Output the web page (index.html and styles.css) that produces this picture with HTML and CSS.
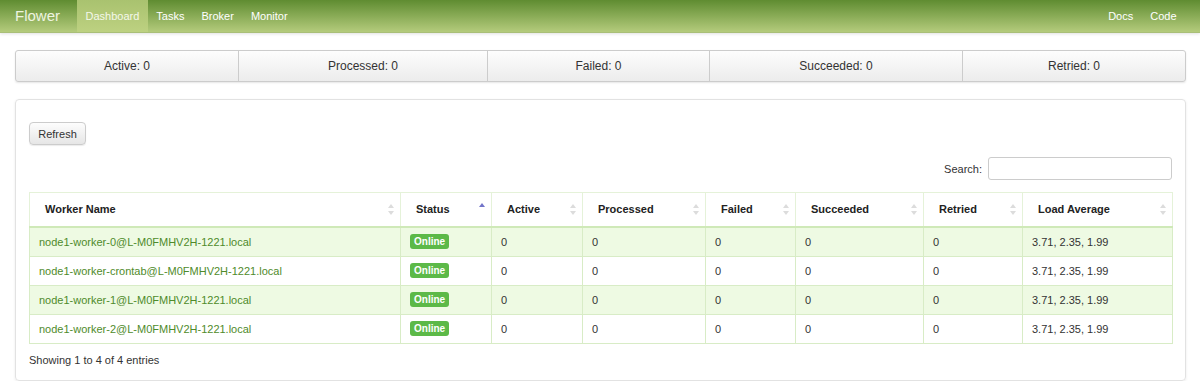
FILE: index.html
```html
<!DOCTYPE html>
<html lang="en">
<head>
  <meta charset="UTF-8">
  <title>Flower</title>
  <link rel="stylesheet" href="styles.css">
</head>
<body>
  <div class="navbar">
    <span class="brand">Flower</span>
    <a class="nav-link active">Dashboard</a>
    <a class="nav-link">Tasks</a>
    <a class="nav-link">Broker</a>
    <a class="nav-link">Monitor</a>
    <span class="spacer"></span>
    <a class="nav-link">Docs</a>
    <a class="nav-link">Code</a>
  </div>

  <div class="stats">
    <div class="stat" style="width:222px">Active: 0</div>
    <div class="stat" style="width:248px">Processed: 0</div>
    <div class="stat" style="width:221px">Failed: 0</div>
    <div class="stat" style="width:252px">Succeeded: 0</div>
    <div class="stat last">Retried: 0</div>
  </div>

  <div class="panel">
    <button class="btn">Refresh</button>
    <div class="search-row">
      <label>Search:</label>
      <input type="text" class="search">
    </div>
    <table class="workers">
      <thead>
        <tr>
          <th style="width:371px">Worker Name<span class="sort"></span></th>
          <th style="width:91px">Status<span class="sort asc"></span></th>
          <th style="width:91px">Active<span class="sort"></span></th>
          <th style="width:123px">Processed<span class="sort"></span></th>
          <th style="width:90px">Failed<span class="sort"></span></th>
          <th style="width:128px">Succeeded<span class="sort"></span></th>
          <th style="width:99px">Retried<span class="sort"></span></th>
          <th>Load Average<span class="sort"></span></th>
        </tr>
      </thead>
      <tbody>
        <tr class="odd">
          <td class="name">node1-worker-0@L-M0FMHV2H-1221.local</td>
          <td><span class="badge">Online</span></td>
          <td>0</td><td>0</td><td>0</td><td>0</td><td>0</td>
          <td>3.71, 2.35, 1.99</td>
        </tr>
        <tr>
          <td class="name">node1-worker-crontab@L-M0FMHV2H-1221.local</td>
          <td><span class="badge">Online</span></td>
          <td>0</td><td>0</td><td>0</td><td>0</td><td>0</td>
          <td>3.71, 2.35, 1.99</td>
        </tr>
        <tr class="odd">
          <td class="name">node1-worker-1@L-M0FMHV2H-1221.local</td>
          <td><span class="badge">Online</span></td>
          <td>0</td><td>0</td><td>0</td><td>0</td><td>0</td>
          <td>3.71, 2.35, 1.99</td>
        </tr>
        <tr>
          <td class="name">node1-worker-2@L-M0FMHV2H-1221.local</td>
          <td><span class="badge">Online</span></td>
          <td>0</td><td>0</td><td>0</td><td>0</td><td>0</td>
          <td>3.71, 2.35, 1.99</td>
        </tr>
      </tbody>
    </table>
    <div class="info">Showing 1 to 4 of 4 entries</div>
  </div>
</body>
</html>
```

FILE: styles.css
```css
body {
  margin: 0;
  font-family: 'Liberation Sans', Arial, sans-serif;
  font-size: 11px;
  color: #333;
  background: #fff;
}
.navbar {
  display: flex;
  align-items: stretch;
  height: 32px;
  padding: 0 15px;
  background: linear-gradient(to bottom, #5f8c31, #b4cb7c);
  border-bottom: 1px solid #a9bf78;
  box-shadow: 0 1px 3px rgba(0, 0, 0, 0.12);
}
.brand {
  color: #eef4e0;
  font-size: 15px;
  font-weight: 300;
  line-height: 32px;
  margin-right: 17px;
}
.nav-link {
  color: #fff;
  font-size: 11px;
  line-height: 32px;
  padding: 0 8.5px;
}
.nav-link.active {
  background: linear-gradient(to bottom, #a9c26f, #bdd181);
  color: #f4f8ea;
}
.spacer {
  flex: 1;
}
.stats {
  display: flex;
  margin: 17px 14px 0 15px;
  height: 30px;
  border: 1px solid #ccc;
  border-radius: 3px;
  background: linear-gradient(to bottom, #fdfdfd, #ececec);
  box-shadow: 0 1px 2px rgba(0, 0, 0, 0.1);
}
.stat {
  border-right: 1px solid #ccc;
  text-align: center;
  line-height: 30px;
  font-size: 12px;
  color: #333;
}
.stat.last {
  flex: 1;
  border-right: none;
}
.panel {
  margin: 17px 14px 0 15px;
  padding: 22px 13px 14px 13px;
  border: 1px solid #e2e2e2;
  border-radius: 4px;
  box-shadow: 0 1px 3px rgba(0, 0, 0, 0.08);
}
.btn {
  font-family: inherit;
  font-size: 11px;
  color: #333;
  width: 57px;
  height: 23px;
  border: 1px solid #ccc;
  border-radius: 4px;
  background: linear-gradient(to bottom, #fdfdfd, #e6e6e6);
  box-shadow: 0 1px 1px rgba(0, 0, 0, 0.08);
  padding: 0;
}
.search-row {
  display: flex;
  justify-content: flex-end;
  align-items: center;
  gap: 6px;
  margin-top: 12px;
  margin-right: 0;
}
.search {
  width: 182px;
  height: 21px;
  border: 1px solid #ccc;
  border-radius: 3px;
  padding: 0;
  box-sizing: content-box;
}
.workers {
  width: 1144px;
  margin-top: 12px;
  border-collapse: collapse;
  border: 1px solid #d8ecc6;
  table-layout: fixed;
}
.workers th {
  position: relative;
  box-sizing: border-box;
  text-align: left;
  font-weight: bold;
  height: 34px;
  padding: 0 15px;
  border: 1px solid #e5f2d9;
  border-bottom: 2px solid #cfe9b8;
  color: #222;
}
.workers td {
  height: 28px;
  padding: 0 9px;
  border: 1px solid #d8ecc6;
  color: #333;
  white-space: nowrap;
}
.workers tr.odd td {
  background: #eefae3;
}
.workers td.name {
  color: #4f8b2b;
}
.sort {
  position: absolute;
  right: 6px;
  top: 11px;
  width: 6px;
  height: 11px;
}
.sort::before,
.sort::after {
  content: '';
  position: absolute;
  left: 0;
  border-left: 3px solid transparent;
  border-right: 3px solid transparent;
}
.sort::before {
  top: 0;
  border-bottom: 4px solid #dcdcdc;
}
.sort::after {
  bottom: 0;
  border-top: 4px solid #dcdcdc;
}
.sort.asc {
  top: 10px;
  right: 6px;
}
.sort.asc::before {
  border-bottom-color: #7274c9;
}
.sort.asc::after {
  display: none;
}
.badge {
  display: inline-block;
  background: #5cb948;
  color: #fff;
  font-weight: bold;
  font-size: 10px;
  padding: 2px 4px;
  border-radius: 3px;
  line-height: 11px;
}
.info {
  margin-top: 10px;
  color: #333;
}
```
